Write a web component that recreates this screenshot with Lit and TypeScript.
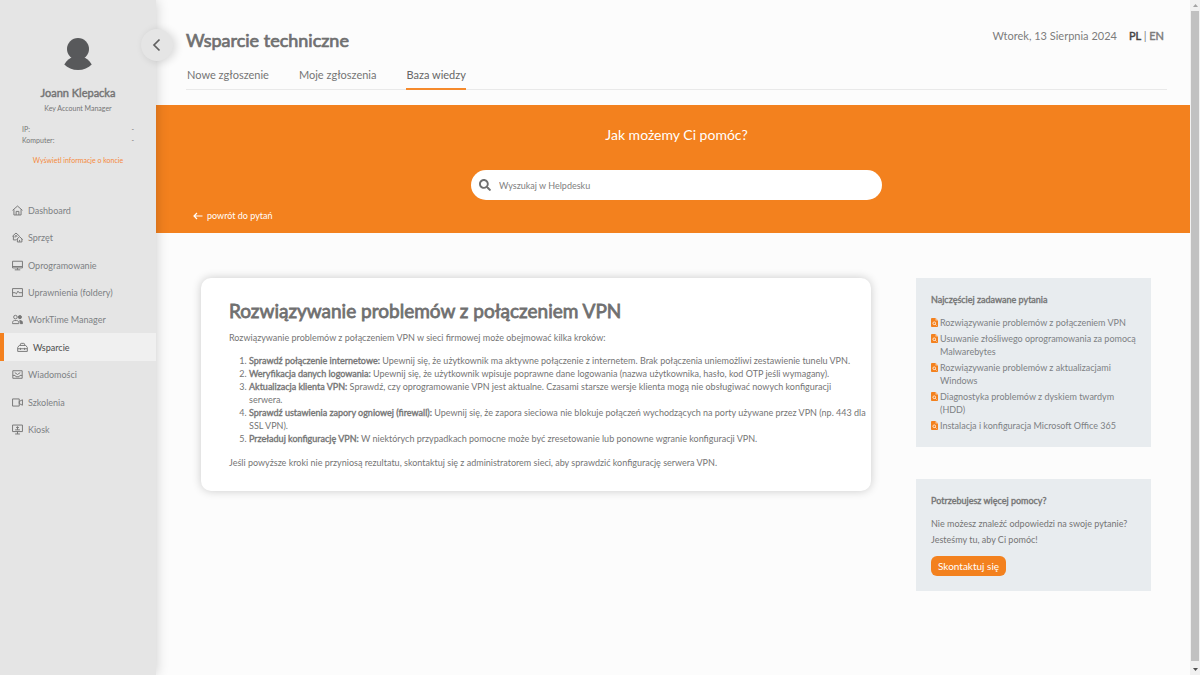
import { LitElement, html, css, svg } from "lit";
import { customElement, state } from "lit/decorators.js";
import { classMap } from "lit/directives/class-map.js";

interface MenuItem {
  label: string;
  icon: unknown;
  active?: boolean;
}

const menu: MenuItem[] = [
  {
    label: "Dashboard",
    icon: svg`<path d="M.8 7.800 8 1.500l7.200 6.300M2.800 6.500V14.500h10.400V6.500"/><path d="M6 14.500V9.300h4v5.200"/>`,
  },
  {
    label: "Sprzęt",
    icon: svg`<path d="M.6 6.200 5.800 1.500 11 6.200M2 5.500v6h4M4.500 8V5.500h2.700v1.500"/><path d="M6.500 11 11 6.800l4.500 4.200M7.800 10v4.500h6.600V10M11 14v-2.500"/>`,
  },
  {
    label: "Oprogramowanie",
    icon: svg`<path d="M.8 1.800h14.400v9.700H.8zM.8 9.500h14.400M4 14.300h8M8 11.500v2.500"/>`,
  },
  {
    label: "Uprawnienia (foldery)",
    icon: svg`<path d="M.8 2.300h14.400v11.400H.8zM.8 8.300h3.700l1.800 1.700 2.400-4 1.500 2.300h5"/>`,
  },
  {
    label: "WorkTime Manager",
    icon: svg`<circle cx="5" cy="4.500" r="2.600"/><path d="M.8 14v-1.500c0-2 1.500-3 3-3h3c1.500 0 3 1 3 3V14z"/><circle cx="11.500" cy="4.500" r="2.300" fill="currentColor"/><path d="M11.300 9.500c2.400 0 3.900 1 3.900 3V14h-3z" fill="currentColor"/>`,
  },
  {
    label: "Wsparcie",
    active: true,
    icon: svg`<path d="M1 13.700V8l2.200-3h9.600L15 8v5.700zM1 9.800h14M5 5V3.200C5 2.500 5.500 2 6.200 2h3.600c.7 0 1.200.5 1.200 1.200V5M5 8.500v3M11 8.500v3"/>`,
  },
  {
    label: "Wiadomości",
    icon: svg`<path d="M1.200 2.500h13.600v11H1.200zM1.200 9.300h3.300l1.300 2h4.400l1.300-2h3.300M4 5.200l4 2.800 4-2.800"/>`,
  },
  {
    label: "Szkolenia",
    icon: svg`<path d="M.8 2.800h9.700v10.400H.8zM10.500 6.500 15.200 4v8l-4.700-2.500z"/>`,
  },
  {
    label: "Kiosk",
    icon: svg`<path d="M.8 1.500h14.400v9.500H.8zM4.500 14.500h7M8 11v3.500"/><path d="M8 8.500V4M6 5.800 8 3.800l2 2M4.500 8.500h7"/>`,
  },
];

const steps: [string, string][] = [
  [
    "Sprawdź połączenie internetowe:",
    "Upewnij się, że użytkownik ma aktywne połączenie z internetem. Brak połączenia uniemożliwi zestawienie tunelu VPN.",
  ],
  [
    "Weryfikacja danych logowania:",
    "Upewnij się, że użytkownik wpisuje poprawne dane logowania (nazwa użytkownika, hasło, kod OTP jeśli wymagany).",
  ],
  [
    "Aktualizacja klienta VPN:",
    "Sprawdź, czy oprogramowanie VPN jest aktualne. Czasami starsze wersje klienta mogą nie obsługiwać nowych konfiguracji\nserwera.",
  ],
  [
    "Sprawdź ustawienia zapory ogniowej (firewall):",
    "Upewnij się, że zapora sieciowa nie blokuje połączeń wychodzących na porty używane przez VPN (np. 443 dla\nSSL VPN).",
  ],
  [
    "Przeładuj konfigurację VPN:",
    "W niektórych przypadkach pomocne może być zresetowanie lub ponowne wgranie konfiguracji VPN.",
  ],
];

const questions = [
  "Rozwiązywanie problemów z połączeniem VPN",
  "Usuwanie złośliwego oprogramowania za pomocą Malwarebytes",
  "Rozwiązywanie problemów z aktualizacjami Windows",
  "Diagnostyka problemów z dyskiem twardym (HDD)",
  "Instalacja i konfiguracja Microsoft Office 365",
];

const tabs = ["Nowe zgłoszenie", "Moje zgłoszenia", "Baza wiedzy"];

@customElement("app-root")
export class AppRoot extends LitElement {
  @state() private tab = 2;

  static styles = css`
    :host {
      display: flex;
      height: 100vh;
      overflow: hidden;
      background: #fcfcfc;
      color: #757575;
      font-family: Lato, "Open Sans", sans-serif;
      font-size: 9px;
      line-height: 13px;
    }
    * {
      box-sizing: border-box;
    }
    a {
      color: inherit;
      text-decoration: none;
    }
    h1, h2, h3, p, ul, ol {
      margin: 0;
      padding: 0;
      font-weight: 400;
    }
    ul {
      list-style: none;
    }
    button, input {
      font: inherit;
      color: inherit;
      border: 0;
      margin: 0;
      padding: 0;
      background: none;
    }
    .heavy {
      font-weight: 400;
      -webkit-text-stroke: 0.04em currentColor;
    }

    .sidebar {
      position: relative;
      z-index: 1;
      flex: none;
      width: 156px;
      background: #e5e5e5;
      box-shadow: 0 0 12px rgba(0, 0, 0, 0.2);
    }
    .collapse {
      position: absolute;
      top: 29px;
      right: -17px;
      width: 32px;
      height: 32px;
      border-radius: 50%;
      background: #e5e5e5;
      box-shadow: 3px 1px 8px rgba(0, 0, 0, 0.14);
      display: grid;
      place-items: center;
    }
    .collapse svg {
      width: 12px;
      height: 14px;
    }
    .profile {
      display: flex;
      flex-direction: column;
      align-items: center;
      height: 196px;
      padding: 37px 22px 0;
      font-size: 7px;
      line-height: 11px;
    }
    .avatar {
      width: 30px;
      height: 34px;
      color: #58595b;
    }
    .name {
      margin-top: 14px;
      font-size: 11px;
      line-height: 16px;
    }
    .role {
      margin-top: 2px;
    }
    .device {
      align-self: stretch;
      margin: 10px 0 0;
    }
    .device div {
      display: flex;
      justify-content: space-between;
    }
    .device dd {
      margin: 0;
    }
    .account {
      margin-top: 9px;
      color: #f58a3c;
    }
    .menu {
      display: grid;
      grid-auto-rows: 1fr;
      height: 247px;
    }
    .item {
      display: flex;
      align-items: center;
      gap: 5px;
      height: 100%;
      padding: 1px 0 0 12px;
      color: #7d8184;
    }
    .item svg {
      width: 11px;
      height: 11px;
      color: #777;
    }
    .item.active {
      padding-left: 13px;
      border-left: 4px solid #f4811f;
      background: #f0f0f0;
      color: #4d4d4d;
    }

    .page {
      flex: 1;
      min-width: 0;
    }
    .header {
      height: 105px;
      padding: 28px 23px 0 30px;
    }
    .top {
      display: flex;
      justify-content: space-between;
    }
    .title {
      font-size: 18px;
      line-height: 24px;
      color: #707070;
    }
    .meta {
      display: flex;
      gap: 12px;
      padding-right: 3px;
      font-size: 11px;
      line-height: 16px;
      color: #7c7c7c;
    }
    .lang .on {
      color: #444;
    }
    .tabs {
      display: flex;
      gap: 30px;
      margin-top: 14px;
      padding-left: 1px;
      border-bottom: 1px solid #e9e9e9;
    }
    .tab {
      height: 24px;
      margin-bottom: -1px;
      padding: 1px 0 5px;
      border-bottom: 2px solid transparent;
      font-size: 11px;
      line-height: 16px;
      cursor: pointer;
    }
    .tab.on {
      border-bottom-color: #f58a2c;
      color: #666;
    }

    .banner {
      display: flex;
      flex-direction: column;
      align-items: center;
      height: 128px;
      padding: 19px 23px 0 30px;
      background: #f3811e;
      color: #fff;
    }
    .ask {
      font-size: 14px;
      line-height: 22px;
    }
    .search {
      display: flex;
      align-items: center;
      gap: 8px;
      width: 100%;
      max-width: 411px;
      height: 30px;
      margin-top: 24px;
      padding: 0 16px 0 8px;
      border-radius: 15px;
      background: #fff;
      color: #707070;
    }
    .search svg {
      flex: none;
      width: 12px;
      height: 12px;
    }
    .search input {
      flex: 1;
      min-width: 0;
      outline: none;
    }
    .search input::placeholder {
      color: #808080;
      opacity: 1;
    }
    .back {
      display: flex;
      align-items: center;
      align-self: flex-start;
      gap: 4px;
      margin-top: 9px;
      padding-left: 7px;
    }
    .back svg {
      width: 10px;
      height: 8px;
    }

    .body {
      display: flex;
      align-items: flex-start;
      gap: 45px;
      padding: 45px 39px 0 45px;
    }
    .article {
      flex: 1;
      min-width: 0;
      padding: 20px 4px 22px 28px;
      border-radius: 10px;
      background: #fff;
      box-shadow: 0 0 10px rgba(0, 0, 0, 0.2);
    }
    .article h2 {
      font-size: 19px;
      line-height: 26px;
      color: #707070;
    }
    .article .intro {
      margin-top: 7px;
    }
    .article ol {
      margin: 10px 0 11px;
      padding-left: 20px;
      white-space: pre-line;
    }
    .side {
      display: grid;
      gap: 32px;
      width: 235px;
    }
    .panel {
      padding: 15px;
      background: #e8ecef;
    }
    .panel h3 {
      font-size: 9px;
      line-height: 14px;
    }
    .faq {
      display: grid;
      gap: 3px;
      margin-top: 9px;
    }
    .faq a {
      display: flex;
      gap: 2px;
      color: #7d8184;
    }
    .faq svg {
      flex: none;
      width: 7px;
      height: 9px;
      margin-top: 2px;
    }
    .help {
      margin-top: 8px;
      line-height: 16px;
    }
    .contact {
      height: 20px;
      margin-top: 8px;
      padding: 0 7px;
      border-radius: 6px;
      background: #f3811e;
      color: #fff;
      font-size: 10px;
    }

    .scroll {
      display: flex;
      flex-direction: column;
      align-items: center;
      justify-content: space-between;
      flex: none;
      width: 10px;
      padding: 4px 1px;
      background: #f1f1f1;
    }
    .scroll svg {
      width: 5px;
      height: 3px;
      color: #505050;
    }
    .scroll .up {
      color: #a3a3a3;
    }
    .thumb {
      flex: 1;
      width: 8px;
      margin: 4px 0 7px;
      background: #c1c1c1;
    }
  `;

  render() {
    return html`
      <aside class="sidebar">
        <button class="collapse" aria-label="Zwiń menu">
          <svg viewBox="0 0 12 14" fill="none" stroke="#606060" stroke-width="1.700"><path d="M8.500 1.500 3 7l5.500 5.500" /></svg>
        </button>
        <div class="profile">
          <svg class="avatar" viewBox="0 0 30 34" fill="currentColor">
            <circle cx="15" cy="12" r="11" />
            <path d="M1.300 27.500C3.500 23.500 7 21 10 20.300h10c3 .7 6.500 3.200 8.700 7.200C25.500 31 20.500 33 15 33S4.500 31 1.300 27.500z" />
          </svg>
          <div class="name heavy">Joann Klepacka</div>
          <div class="role">Key Account Manager</div>
          <dl class="device">
            <div><dt>IP:</dt><dd>-</dd></div>
            <div><dt>Komputer:</dt><dd>-</dd></div>
          </dl>
          <a class="account" href="#">Wyświetl informacje o koncie</a>
        </div>
        <nav>
          <ul class="menu">
            ${menu.map(
              (m) => html`<li>
                <a class=${classMap({ item: true, active: !!m.active })} href="#">
                  <svg viewBox="0 0 16 16" fill="none" stroke="currentColor" stroke-width="1.400">${m.icon}</svg>
                  <span>${m.label}</span>
                </a>
              </li>`
            )}
          </ul>
        </nav>
      </aside>

      <main class="page">
        <header class="header">
          <div class="top">
            <h1 class="title heavy">Wsparcie techniczne</h1>
            <div class="meta">
              <span>Wtorek, 13 Sierpnia 2024</span>
              <span class="lang"><a class="on heavy" href="#">PL</a> | <a class="heavy" href="#">EN</a></span>
            </div>
          </div>
          <nav class="tabs">
            ${tabs.map(
              (t, i) => html`<button
                class=${classMap({ tab: true, on: i === this.tab })}
                @click=${() => (this.tab = i)}
              >${t}</button>`
            )}
          </nav>
        </header>

        <section class="banner">
          <h2 class="ask">Jak możemy Ci pomóc?</h2>
          <label class="search">
            <svg viewBox="0 0 512 512" fill="currentColor" aria-hidden="true">
              <path d="M505 442.700 405.300 343c-4.500-4.500-10.600-7-17-7H372c27.600-35.300 44-79.700 44-128C416 93.100 322.900 0 208 0S0 93.100 0 208s93.100 208 208 208c48.300 0 92.700-16.400 128-44v16.300c0 6.400 2.500 12.500 7 17l99.700 99.700c9.400 9.400 24.600 9.400 33.900 0l28.300-28.300c9.400-9.400 9.400-24.600.1-34zM208 336c-70.700 0-128-57.200-128-128 0-70.700 57.200-128 128-128 70.700 0 128 57.200 128 128 0 70.700-57.200 128-128 128z" />
            </svg>
            <input type="text" placeholder="Wyszukaj w Helpdesku" aria-label="Wyszukaj w Helpdesku" />
          </label>
          <a class="back" href="#">
            <svg viewBox="0 0 10 8" fill="none" stroke="currentColor" stroke-width="1.200"><path d="M9.500 4H1M4 1 1 4l3 3" /></svg>
            <span>powrót do pytań</span>
          </a>
        </section>

        <div class="body">
          <article class="article">
            <h2 class="heavy">Rozwiązywanie problemów z połączeniem VPN</h2>
            <p class="intro">Rozwiązywanie problemów z połączeniem VPN w sieci firmowej może obejmować kilka kroków:</p>
            <ol>${steps.map(([head, text]) => html`<li><strong class="heavy">${head}</strong> ${text}</li>`)}</ol>
            <p>Jeśli powyższe kroki nie przyniosą rezultatu, skontaktuj się z administratorem sieci, aby sprawdzić konfigurację serwera VPN.</p>
          </article>

          <div class="side">
            <section class="panel">
              <h3 class="heavy">Najczęściej zadawane pytania</h3>
              <ul class="faq">
                ${questions.map(
                  (q) => html`<li>
                    <a href="#">
                      <svg viewBox="0 0 14 18">
                        <path fill="#f3811e" d="M1.500 0H9l5 5v11.500c0 .8-.7 1.500-1.500 1.500h-11C.7 18 0 17.300 0 16.500v-15C0 .7.7 0 1.500 0z" />
                        <path fill="#f9c79b" d="M9 0l5 5H9z" />
                        <circle cx="6.500" cy="10.500" r="2.700" fill="none" stroke="#fff" stroke-width="1.500" />
                        <path d="m8.500 12.500 2.500 2.500" stroke="#fff" stroke-width="1.500" />
                      </svg>
                      <span>${q}</span>
                    </a>
                  </li>`
                )}
              </ul>
            </section>
            <section class="panel">
              <h3 class="heavy">Potrzebujesz więcej pomocy?</h3>
              <p class="help">Nie możesz znaleźć odpowiedzi na swoje pytanie?<br />Jesteśmy tu, aby Ci pomóc!</p>
              <button class="contact">Skontaktuj się</button>
            </section>
          </div>
        </div>
      </main>

      <div class="scroll" aria-hidden="true">
        <svg class="up" viewBox="0 0 5 3" fill="currentColor"><path d="M0 3 2.500 0 5 3z" /></svg>
        <div class="thumb"></div>
        <svg viewBox="0 0 5 3" fill="currentColor"><path d="M0 0h5L2.500 3z" /></svg>
      </div>
    `;
  }
}
